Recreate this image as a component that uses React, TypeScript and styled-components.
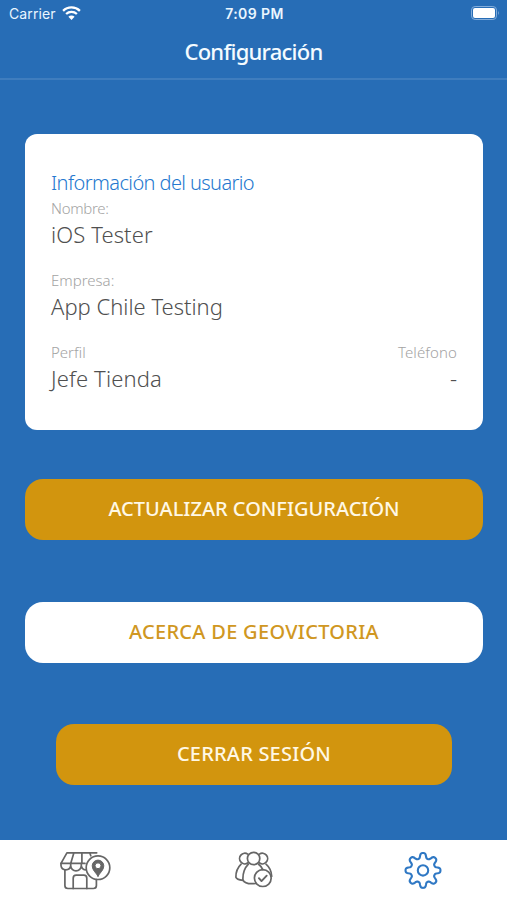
import React from "react";
import styled, { createGlobalStyle } from "styled-components";

const GlobalStyle = createGlobalStyle`
  * { box-sizing: border-box; }
  body { margin: 0; }
`;

const Screen = styled.main`
  width: 507px;
  height: 900px;
  display: flex;
  flex-direction: column;
  background: #276db6;
  font-family: "Noto Sans", sans-serif;
  overflow: hidden;
`;

const StatusBar = styled.div`
  height: 27px;
  padding: 0 7px 0 9px;
  display: grid;
  grid-template-columns: 1fr auto 1fr;
  align-items: center;
  color: #eaf6ff;
  font: 400 14px/27px Inter, sans-serif;
`;

const Carrier = styled.div`
  display: flex;
  align-items: center;
  gap: 6px;
  letter-spacing: 0.1px;

  svg { margin-top: -2px; }
`;

const Clock = styled.div`
  font-weight: 600;
  font-size: 14px;
  letter-spacing: 0.4px;
`;

const BatterySlot = styled.div`
  display: flex;
  justify-content: flex-end;

  svg { margin-top: -1px; }
`;

const Header = styled.header`
  height: 53px;
  border-bottom: 2px solid #3f7dbe;
  text-align: center;
`;

const Title = styled.h1`
  margin: 0;
  color: #f4fbff;
  font-size: 22px;
  line-height: 48px;
  font-weight: 500;
  letter-spacing: -0.75px;
`;

const Content = styled.section`
  flex: 1;
  padding: 54px 24px 0 25px;
  display: flex;
  flex-direction: column;
`;

const Card = styled.div`
  height: 296px;
  padding: 34px 26px 0 26px;
  border-radius: 12px;
  background: #fff;
`;

const CardTitle = styled.h2`
  margin: 0;
  height: 28px;
  color: #2478cf;
  font-size: 20px;
  line-height: 29px;
  font-weight: 300;
  letter-spacing: -0.6px;
  white-space: nowrap;
`;

const FieldRow = styled.div`
  height: 72px;
  display: flex;
  justify-content: space-between;
`;

const Field = styled.div<{ $end?: boolean }>`
  text-align: ${(p) => (p.$end ? "right" : "left")};
  white-space: nowrap;
`;

const Label = styled.div<{ $track?: number }>`
  color: #a3a3a3;
  font-size: 15px;
  line-height: 24px;
  font-weight: 300;
  letter-spacing: ${(p) => p.$track ?? 0}px;
`;

const Value = styled.div<{ $track?: number }>`
  color: #505050;
  font-size: 22px;
  line-height: 29px;
  font-weight: 300;
  letter-spacing: ${(p) => p.$track ?? 0}px;
`;

const Actions = styled.div`
  margin-top: 49px;
  display: flex;
  flex-direction: column;
  gap: 62px;
`;

const ActionButton = styled.button<{ $light?: boolean; $inset?: boolean; $track: number }>`
  height: 61px;
  margin: 0 ${(p) => (p.$inset ? 31 : 0)}px;
  padding: 0 0 3px;
  border: 0;
  border-radius: 18px;
  background: ${(p) => (p.$light ? "#fff" : "#d2950e")};
  color: ${(p) => (p.$light ? "#d09722" : "#fff8e5")};
  font-family: inherit;
  font-size: 20px;
  font-weight: 500;
  letter-spacing: ${(p) => p.$track}px;
  white-space: nowrap;

  &:last-child { margin-top: -1px; }
`;

const TabBar = styled.nav`
  height: 60px;
  display: grid;
  grid-template-columns: repeat(3, 1fr);
  background: #fff;
`;

const Tab = styled.a<{ $active?: boolean }>`
  display: flex;
  justify-content: center;
  align-items: center;
  color: ${(p) => (p.$active ? "#2f78c4" : "#666")};
`;

const Icon = styled.svg`
  display: block;
  fill: none;
  stroke: currentColor;
  stroke-width: 1.7;
  stroke-linecap: round;
  stroke-linejoin: round;
`;

const WifiIcon = () => (
  <svg width="19" height="14" viewBox="0 0 19 14" fill="none" stroke="#fff" strokeWidth="2.3">
    <path d="M1.1 4.9a12 12 0 0 1 16.8 0M4.1 8a7.8 7.8 0 0 1 10.8 0" />
    <path d="M9.5 14 6.4 10.8a4.4 4.4 0 0 1 6.2 0Z" fill="#fff" stroke="none" />
  </svg>
);

const BatteryIcon = () => (
  <svg width="29" height="14" viewBox="0 0 29 14">
    <rect x=".5" y=".5" width="25" height="13" rx="3.6" fill="none" stroke="#83addb" />
    <rect x="2" y="2" width="22" height="10" rx="2" fill="#fff" />
    <path d="M27 4.7q1.8 2.3 0 4.6Z" fill="#83addb" />
  </svg>
);

const StoreIcon = () => (
  <Icon width="52" height="40" viewBox="-0.7 0 52 40">
    <path d="M37 2.8H7.2L1.3 13.4h24M14.2 2.8l-3.2 10.6M22.2 2.8v10.6M30 2.8l1.1 3" />
    <path d="M1.3 13.4v2.2a4.9 4.9 0 0 0 9.7 0v-2.2 2.2a5.3 5.3 0 0 0 10.6 0v-2.2 2.2q.8 3.8 4 4.3" />
    <path d="M5.2 20v15.5q0 3 3 3h25.5q3 0 3-3v-6" />
    <path d="M13.5 38.5V28.2q0-3 3-3h7.6q3 0 3 3v10.3" />
    <circle cx="38.3" cy="17.7" r="11.8" />
    <path fillRule="evenodd" fill="currentColor" strokeWidth="1" d="M38.3 26.3c-1.4-3.2-5.8-6-5.8-10.4a5.8 5.8 0 0 1 11.6 0c0 4.4-4.4 7.2-5.8 10.4ZM38.3 12.7a3 3 0 1 0 0 6 3 3 0 0 0 0-6Z" />
  </Icon>
);

const PeopleIcon = () => (
  <Icon width="40" height="40" viewBox="0 0 40 40">
    <circle cx="19.6" cy="8.5" r="6.2" />
    <path d="M13.8 4.1a5.3 5.3 0 1 0 .2 8.7M25.4 4.1a5.3 5.3 0 1 1-.2 8.7" />
    <path d="M7.1 14.2c-3.4 3.3-5.3 8.5-5.2 13 .5 1.6 3.5 2.7 7 3.1" />
    <path d="M14.4 14.2c-3.5 3.5-5.7 9.3-5.5 15.6 1.4 3.2 7.2 4.3 12.7 3.7" />
    <path d="M24.5 14.2c2 1.4 3.4 3.2 4.3 5.4M32 14.2c3.5 3 5.4 7.4 5.7 12" />
    <circle cx="28.8" cy="28.1" r="8.4" />
    <path d="m24.9 28.2 2.6 2.9 5.2-5.4" strokeWidth="1.9" />
  </Icon>
);

const GEAR_TEETH = 8;
const gearPath = Array.from({ length: 160 }, (_, i) => {
  const angle = (i / 160) * Math.PI * 2;
  const wave = Math.cos(GEAR_TEETH * angle);
  const radius = 14.9 + 2.55 * Math.tanh(1.7 * wave) / Math.tanh(1.7);
  return `${i ? "L" : "M"}${(20 + radius * Math.cos(angle)).toFixed(2)} ${(20 + radius * Math.sin(angle)).toFixed(2)}`;
}).join("") + "Z";

const GearShape = styled(Icon)`
  stroke-width: 2.1;
`;

const GearIcon = () => (
  <GearShape width="40" height="40" viewBox="0 -0.4 40 40">
    <path d={gearPath} />
    <circle cx="20" cy="20" r="5.2" />
  </GearShape>
);

export default function App() {
  return (
    <Screen>
      <GlobalStyle />
      <StatusBar>
        <Carrier>Carrier <WifiIcon /></Carrier>
        <Clock>7:09 PM</Clock>
        <BatterySlot><BatteryIcon /></BatterySlot>
      </StatusBar>
      <Header><Title>Configuración</Title></Header>
      <Content>
        <Card>
          <CardTitle>Información del usuario</CardTitle>
          <FieldRow>
            <Field><Label $track={-0.3}>Nombre:</Label><Value $track={0.1}>iOS Tester</Value></Field>
          </FieldRow>
          <FieldRow>
            <Field><Label>Empresa:</Label><Value>App Chile Testing</Value></Field>
          </FieldRow>
          <FieldRow>
            <Field><Label>Perfil</Label><Value $track={0.15}>Jefe Tienda</Value></Field>
            <Field $end><Label $track={0.1}>Teléfono</Label><Value>-</Value></Field>
          </FieldRow>
        </Card>
        <Actions>
          <ActionButton $track={0}>ACTUALIZAR CONFIGURACIÓN</ActionButton>
          <ActionButton $light $track={0.3}>ACERCA DE GEOVICTORIA</ActionButton>
          <ActionButton $inset $track={0.2}>CERRAR SESIÓN</ActionButton>
        </Actions>
      </Content>
      <TabBar>
        <Tab><StoreIcon /></Tab>
        <Tab><PeopleIcon /></Tab>
        <Tab $active><GearIcon /></Tab>
      </TabBar>
    </Screen>
  );
}
